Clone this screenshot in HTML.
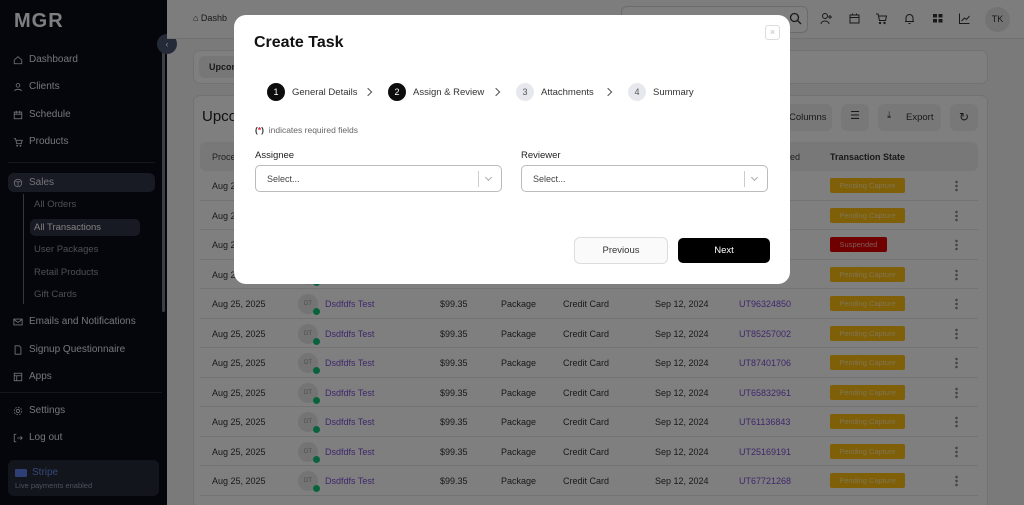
<!DOCTYPE html>
<html><head><meta charset="utf-8"><style>
*{box-sizing:border-box;margin:0;padding:0}
html,body{width:1024px;height:505px;overflow:hidden;background:#f4f5f7}
body{font-family:"Liberation Sans","DejaVu Sans",sans-serif;position:relative}
.a{position:absolute}
#sb{left:0;top:0;width:167px;height:505px;background:#0b0d19}
.ni{position:absolute;left:13px;font-size:10px;color:#e6e8ee;display:flex;align-items:center;gap:6px}
.ni svg{width:10px;height:10px}
.sub{position:absolute;left:34px;font-size:9.5px;color:#9a9ea8}
.hdr{left:167px;top:0;width:857px;height:39px;border-bottom:1px solid #e2e2e2;background:#fafafa}
.row{position:absolute;left:200px;width:778px;height:29.5px;border-bottom:1px solid #e6e6e6;font-size:9px;color:#333}
.row span{position:absolute;top:10px}
.av{position:absolute;left:98px;top:5px;width:20px;height:20px;border-radius:50%;background:#e8e8e8;color:#999;font-size:6px;text-align:center;line-height:20px}
.dot{position:absolute;left:113px;top:19px;width:7px;height:7px;border-radius:50%;background:#14c47a}
.bd{position:absolute;left:630px;top:7px;width:75px;height:15px;border-radius:2px;background:#ffbf0f;color:#ffe9a6;font-size:7.5px;text-align:center;line-height:15px}
.dots{position:absolute;left:755px;top:9px;width:3px;height:12px;background:radial-gradient(circle,#888 1.2px,transparent 1.4px) 0 0/3px 4px}
#ov{left:0;top:0;width:1024px;height:505px;background:rgba(0,0,0,0.5)}
#m{left:234px;top:15px;width:556px;height:269px;background:#fff;border-radius:12px}
.st{position:absolute;top:68px;display:flex;align-items:center;gap:7px;font-size:9.5px;color:#333}
.c{width:18px;height:18px;border-radius:50%;background:#0d0d0d;color:#fff;font-size:9px;text-align:center;line-height:18px}
.c.g{background:#e7e8ee;color:#555}
.chev{position:absolute;top:74px;width:6px;height:6px;border-right:1px solid #555;border-top:1px solid #555;transform:rotate(45deg)}
.sel{position:absolute;top:150px;width:247px;height:27px;border:1px solid #bbb;border-radius:5px;font-size:9px;color:#444;padding:8px 11px}
.sel i{position:absolute;right:22px;top:5px;width:1px;height:16px;background:#ccc}
.sel b{position:absolute;right:10px;top:9px;width:5px;height:5px;border-right:1px solid #aaa;border-bottom:1px solid #aaa;transform:rotate(45deg)}
.ic{position:absolute;top:12px;width:13px;height:13px}
</style></head><body>
<div id="sb" class="a">
<div class="a" style="left:14px;top:10px;font-size:20px;font-weight:bold;color:#fff;letter-spacing:1px">MGR</div>
<div class="ni" style="top:54px"><svg viewBox="0 0 12 12" fill="none" stroke="#e6e8ee"><path d="M1.5 6L6 2l4.5 4v4.5h-9z"/></svg>Dashboard</div>
<div class="ni" style="top:81px"><svg viewBox="0 0 12 12" fill="none" stroke="#e6e8ee"><circle cx="6" cy="4" r="2.2"/><path d="M2 11c0-3 8-3 8 0"/></svg>Clients</div>
<div class="ni" style="top:109px"><svg viewBox="0 0 12 12" fill="none" stroke="#e6e8ee"><rect x="1.5" y="2.5" width="9" height="8"/><path d="M1.5 5h9M4 1v3M8 1v3"/></svg>Schedule</div>
<div class="ni" style="top:136px"><svg viewBox="0 0 12 12" fill="none" stroke="#e6e8ee"><path d="M1 2h2l1.5 6h5.5l1-4H4"/><circle cx="5" cy="10.5" r=".6"/><circle cx="9" cy="10.5" r=".6"/></svg>Products</div>
<div class="a" style="left:8px;top:162px;width:147px;height:1px;background:#2c2f3c"></div>
<div class="a" style="left:8px;top:173px;width:147px;height:19px;border-radius:6px;background:#303648"></div>
<div class="ni" style="top:177px"><svg viewBox="0 0 12 12" fill="none" stroke="#e6e8ee"><circle cx="6" cy="6" r="4.5"/><path d="M3 4.5h6M6 4.5v5"/></svg>Sales</div>
<div class="a" style="left:23px;top:194px;width:1px;height:110px;background:#6a6e7a"></div>
<div class="sub" style="top:199px">All Orders</div>
<div class="a" style="left:30px;top:219px;width:110px;height:17px;border-radius:5px;background:#2e3446"></div>
<div class="sub" style="top:222px;color:#fff">All Transactions</div>
<div class="sub" style="top:244px">User Packages</div>
<div class="sub" style="top:267px">Retail Products</div>
<div class="sub" style="top:289px">Gift Cards</div>
<div class="ni" style="top:316px"><svg viewBox="0 0 12 12" fill="none" stroke="#e6e8ee"><rect x="1" y="2.5" width="10" height="7"/><path d="M1 3l5 3.5L11 3"/></svg>Emails and Notifications</div>
<div class="ni" style="top:344px"><svg viewBox="0 0 12 12" fill="none" stroke="#e6e8ee"><path d="M2.5 1h5l2 2v8h-7z"/></svg>Signup Questionnaire</div>
<div class="ni" style="top:371px"><svg viewBox="0 0 12 12" fill="none" stroke="#e6e8ee"><rect x="1.5" y="1.5" width="9" height="9"/><path d="M1.5 4.5h9M4.5 4.5v6"/></svg>Apps</div>
<div class="a" style="left:0;top:392px;width:162px;height:1px;background:#2c2f3c"></div>
<div class="ni" style="top:405px"><svg viewBox="0 0 12 12" fill="none" stroke="#e6e8ee"><circle cx="6" cy="6" r="2"/><circle cx="6" cy="6" r="4.5" stroke-dasharray="2 1.5"/></svg>Settings</div>
<div class="ni" style="top:432px"><svg viewBox="0 0 12 12" fill="none" stroke="#e6e8ee"><path d="M4 1.5H1.5v9H4M5 6h6M9 4l2 2-2 2"/></svg>Log out</div>
<div class="a" style="left:8px;top:460px;width:151px;height:36px;border-radius:6px;background:#262b3a"></div>
<div class="a" style="left:15px;top:469px;width:12px;height:8px;background:#5b7fe8;border-radius:1px"></div>
<div class="a" style="left:32px;top:467px;font-size:10px;color:#6d8ff0">Stripe</div>
<div class="a" style="left:15px;top:481px;font-size:7.5px;color:#9aa0b0">Live payments enabled</div>
<div class="a" style="left:162px;top:50px;width:3px;height:262px;background:#7a7d88;border-radius:2px"></div>
</div>
<div class="a" style="left:157px;top:34px;width:20px;height:20px;border-radius:50%;background:#4a5570;color:#fff;font-size:9px;text-align:center;line-height:20px">‹</div>
<div class="a hdr"></div>
<div class="a" style="left:193px;top:13px;font-size:9px;color:#333">⌂ Dashb</div>
<div class="a" style="left:621px;top:6px;width:187px;height:27px;border:1px solid #d6d6d6;border-radius:6px;background:#fff"></div>
<svg class="ic" style="left:789px" viewBox="0 0 13 13" fill="none" stroke="#333" stroke-width="1.3"><circle cx="5.5" cy="5.5" r="4"/><path d="M8.5 8.5l3.5 3.5"/></svg>
<svg class="ic" style="left:820px" viewBox="0 0 13 13" fill="none" stroke="#333"><circle cx="5" cy="4" r="2.5"/><path d="M1 12c0-4 8-4 8 0M10 3v4M8 5h4"/></svg>
<svg class="ic" style="left:848px" viewBox="0 0 13 13" fill="none" stroke="#333"><rect x="2" y="3" width="9" height="8"/><path d="M2 5.5h9M4.5 1.5v2M8.5 1.5v2"/></svg>
<svg class="ic" style="left:875px" viewBox="0 0 13 13" fill="none" stroke="#333"><path d="M1 2h2l1.5 6.5h6l1-4.5H4"/><circle cx="5" cy="11" r=".7"/><circle cx="9.5" cy="11" r=".7"/></svg>
<svg class="ic" style="left:903px" viewBox="0 0 13 13" fill="none" stroke="#333"><path d="M3 9.5V6a3.5 3.5 0 017 0v3.5zM2 9.5h9M5.5 11.5h2"/></svg>
<svg class="ic" style="left:931px" viewBox="0 0 13 13" fill="#333"><rect x="2" y="2" width="4" height="3.5"/><rect x="7.5" y="2" width="4" height="3.5"/><rect x="2" y="7" width="4" height="3.5"/><rect x="7.5" y="7" width="4" height="3.5"/></svg>
<svg class="ic" style="left:958px" viewBox="0 0 13 13" fill="none" stroke="#333"><path d="M1.5 1.5v10h10M3.5 9l3-3 2 1.5 3-3.5"/></svg>
<div class="a" style="left:985px;top:7px;width:25px;height:25px;border-radius:50%;background:#e6e6e6;font-size:9px;color:#333;text-align:center;line-height:25px">TK</div>
<div class="a" style="left:193px;top:50px;width:795px;height:34px;border:1px solid #e4e4e4;border-radius:7px;background:#fff"></div>
<div class="a" style="left:199px;top:56px;width:45px;height:22px;border-radius:5px;background:#eee;font-size:9px;font-weight:bold;color:#333;padding:6px 10px">Upcom</div>
<div class="a" style="left:193px;top:95px;width:795px;height:420px;border:1px solid #e4e4e4;border-radius:7px;background:#fff"></div>
<div class="a" style="left:202px;top:108px;font-size:15px;color:#222">Upcoming</div>
<div class="a" style="left:760px;top:104px;width:72px;height:27px;border-radius:6px;background:#f0f0f0;font-size:9.5px;color:#333;padding:8px 0 0 29px">Columns</div>
<div class="a" style="left:841px;top:104px;width:28px;height:27px;border-radius:6px;background:#f0f0f0;font-size:11px;color:#333;text-align:center;line-height:25px">☰</div>
<div class="a" style="left:878px;top:104px;width:63px;height:27px;border-radius:6px;background:#f0f0f0;font-size:9.5px;color:#333;padding:8px 0 0 28px">Export<span style="position:absolute;left:9px;top:6px">⤓</span></div>
<div class="a" style="left:950px;top:104px;width:28px;height:27px;border-radius:6px;background:#f0f0f0;font-size:12px;color:#333;text-align:center;line-height:26px">↻</div>
<div class="a" style="left:200px;top:142px;width:778px;height:29px;border-radius:6px;background:#f0f0f0"></div>
<div class="a" style="left:212px;top:152px;font-size:9px;color:#444">Processed</div>
<div class="a" style="left:790px;top:152px;font-size:9px;color:#444">ed</div>
<div class="a" style="left:830px;top:152px;font-size:9px;color:#333;font-weight:bold">Transaction State</div>
<div id="rows"></div>
<script>
var ids=["","","","","UT96324850","UT85257002","UT87401706","UT65832961","UT61136843","UT25169191","UT67721268",""];
var h="";
for(var i=0;i<11;i++){var y=171+i*29.5;
var b=i==2?'<div class="bd" style="background:#e00000;color:#ffb0b0;width:57px">Suspended</div>':'<div class="bd">Pending Capture</div>';
h+='<div class="row" style="top:'+y+'px"><span style="left:12px">Aug 25, 2025</span><div class="av">DT</div><div class="dot"></div><span style="left:125px;color:#7c4dd6">Dsdfdfs Test</span><span style="left:240px">$99.35</span><span style="left:301px">Package</span><span style="left:363px">Credit Card</span><span style="left:455px">Sep 12, 2024</span><span style="left:539px;color:#7c4dd6">'+ids[i]+'</span>'+b+'<div class="dots"></div></div>';}
document.getElementById("rows").innerHTML=h;
</script>
<div id="ov" class="a"></div>
<div id="m" class="a">
<div class="a" style="left:20px;top:19px;font-size:16px;font-weight:bold;color:#111">Create Task</div>
<div class="a" style="left:531px;top:10px;width:15px;height:15px;border:1px solid #ddd;border-radius:3px;color:#bbb;font-size:9px;text-align:center;line-height:13px">×</div>
<div class="st" style="left:33px"><div class="c">1</div>General Details</div>
<div class="chev" style="left:131px"></div>
<div class="st" style="left:154px"><div class="c">2</div>Assign &amp; Review</div>
<div class="chev" style="left:259px"></div>
<div class="st" style="left:282px"><div class="c g">3</div>Attachments</div>
<div class="chev" style="left:371px"></div>
<div class="st" style="left:394px"><div class="c g">4</div>Summary</div>
<div class="a" style="left:21px;top:110px;font-size:8.5px;color:#666"><b style="color:#333">(<span style="color:#e0223a">*</span>)</b>&nbsp; indicates required fields</div>
<div class="a" style="left:21px;top:135px;font-size:9.5px;color:#222">Assignee</div>
<div class="a" style="left:287px;top:135px;font-size:9.5px;color:#222">Reviewer</div>
<div class="sel" style="left:21px">Select...<i></i><b></b></div>
<div class="sel" style="left:287px">Select...<i></i><b></b></div>
<div class="a" style="left:340px;top:222px;width:94px;height:27px;border:1px solid #ddd;border-radius:6px;background:#fafafa;font-size:9.5px;color:#333;text-align:center;line-height:25px">Previous</div>
<div class="a" style="left:444px;top:223px;width:92px;height:25px;border-radius:5px;background:#000;font-size:9.5px;color:#fff;text-align:center;line-height:25px">Next</div>
</div>
</body></html>
